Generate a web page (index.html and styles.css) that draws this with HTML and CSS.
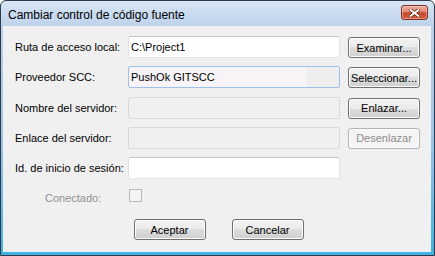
FILE: index.html
```html
<!DOCTYPE html>
<html lang="es">
<head>
    <meta charset="UTF-8" />
    <title>Cambiar control de código fuente</title>
    <link rel="stylesheet" href="styles.css">
</head>
<body>

<div class="window">
    <!-- Barra de título -->
    <div class="titlebar">
        <span class="title">Cambiar control de código fuente</span>
        <button class="close" title="Cerrar">
            <svg width="11" height="8" viewBox="0 0 11 8">
                <path d="M1.5 1 L9.5 7 M9.5 1 L1.5 7" stroke="#5a2418" stroke-width="3.4" stroke-linecap="square"/>
                <path d="M1.5 1 L9.5 7 M9.5 1 L1.5 7" stroke="#ffffff" stroke-width="1.8" stroke-linecap="square"/>
            </svg>
        </button>
    </div>

    <div class="client">
        <div class="form">
            <label class="label">Ruta de acceso local:</label>
            <input class="field" type="text" value="C:\Project1">
            <button class="btn side">Examinar...</button>

            <label class="label">Proveedor SCC:</label>
            <input class="field provider" type="text" value="PushOk GITSCC" readonly>
            <button class="btn side">Seleccionar...</button>

            <label class="label">Nombre del servidor:</label>
            <input class="field" type="text" disabled>
            <button class="btn side">Enlazar...</button>

            <label class="label">Enlace del servidor:</label>
            <input class="field" type="text" disabled>
            <button class="btn side" disabled>Desenlazar</button>

            <label class="label">Id. de inicio de sesión:</label>
            <input class="field" type="text">
            <span></span>

            <label class="label muted">Conectado:</label>
            <input class="check" type="checkbox" disabled>
        </div>

        <div class="actions">
            <button class="btn">Aceptar</button>
            <button class="btn">Cancelar</button>
        </div>
    </div>
</div>

</body>
</html>
```

FILE: styles.css
```css
body {
    margin: 0;
    padding: 0;
    font-family: "Liberation Sans", Arial, sans-serif;
    font-size: 11px;
}

/* Ventana */
.window {
    width: 435px;
    height: 256px;
    box-sizing: border-box;
    border: 1px solid #2c3a4b;
    border-radius: 6px 6px 0 0;
    padding: 0 3px 3px 2px;
    display: flex;
    flex-direction: column;
    background: linear-gradient(#d8e5f4 0, #bcd2eb 26px, #9cc3e8 140px, #42b2e4 250px);
}

.titlebar {
    height: 25px;
    display: flex;
    align-items: flex-start;
    justify-content: space-between;
    padding-left: 5px;
}
.title {
    margin-top: 7px;
    font-size: 12px;
    line-height: 14px;
    color: #000;
}

/* Botón cerrar */
.close {
    width: 27px;
    height: 15px;
    margin: 4px 3px 0 0;
    padding: 0;
    border: 1px solid #7a3326;
    border-radius: 3px;
    background: linear-gradient(#eab0a2 0, #df8670 45%, #c7472b 52%, #d35f40 100%);
    box-shadow: inset 0 0 0 1px rgba(255, 220, 210, 0.45);
    display: flex;
    align-items: center;
    justify-content: center;
}

.client {
    flex: 1;
    background: #f0f0f0;
    padding: 10px 11px 0 12px;
}

/* Formulario */
.form {
    display: grid;
    grid-template-columns: 105px 212px 72px;
    grid-template-rows: 22px 22px 22px 22px 22px 21px;
    column-gap: 8px;
    row-gap: 8.25px;
}
.label {
    align-self: center;
    white-space: nowrap;
    color: #000;
}
.label.muted {
    padding-left: 30px;
    color: #8f8f8f;
}

.field {
    box-sizing: border-box;
    height: 22px;
    margin: 0;
    padding: 0 2px;
    font: inherit;
    color: #000;
    background: #fff;
    border: 1px solid;
    border-color: #c4c8ce #dde1e6 #e3e7eb #dde1e6;
    border-radius: 2px;
    outline: none;
}
.field:disabled {
    background: #f0f0f0;
    border-color: #d9d9d9;
}
.field.provider {
    border-color: #9cc2e8;
    background: linear-gradient(to right, #f7f3f6 0, #f7f3f6 85%, #eeeeee 85%);
}

.check {
    appearance: none;
    margin: 2px 0 0 1px;
    width: 13px;
    height: 13px;
    align-self: start;
    border: 1px solid #b8b8b8;
    background: #f4f4f4;
}

/* Botones */
.btn {
    box-sizing: border-box;
    width: 72px;
    height: 21px;
    padding: 0;
    font: inherit;
    color: #000;
    border: 1px solid #707070;
    border-radius: 3px;
    background: linear-gradient(#f2f2f2 0, #ebebeb 50%, #dddddd 50%, #cfcfcf 100%);
    box-shadow: inset 0 0 0 1px #fbfbfb;
}
.btn:disabled {
    color: #8d8d8d;
    border-color: #b0b4b7;
    background: #f4f4f4;
}
.side {
    align-self: start;
    margin-top: 1px;
}

.actions {
    display: flex;
    justify-content: center;
    gap: 26px;
    padding-left: 2px;
    margin-top: 11px;
}
```
